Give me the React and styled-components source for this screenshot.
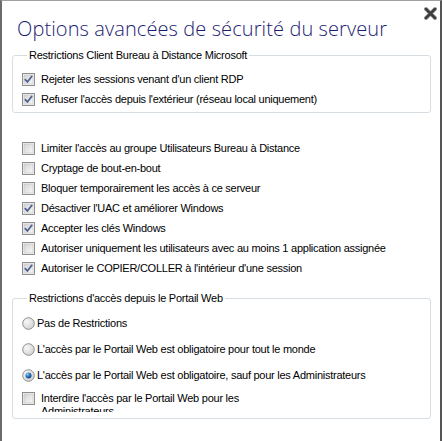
import React from "react";
import styled, { createGlobalStyle } from "styled-components";

const Global = createGlobalStyle`
  html, body { margin: 0; padding: 0; background: #ffffff; }
  body { font-family: "Liberation Sans", Arial, sans-serif; }
`;

const Window = styled.div`
  width: 442px;
  height: 441px;
  box-sizing: border-box;
  background: #ffffff;
  border-top: 1px solid #a0a0a0;
  border-left: 2px solid #6b6b6b;
  border-right: 2px solid #555555;
  overflow: hidden;
  padding: 0 9px 0 10px;
  font-family: "Liberation Sans", Arial, sans-serif;
  font-size: 11px;
  letter-spacing: -0.25px;
  color: #000;
`;

const Header = styled.div`
  display: flex;
  justify-content: space-between;
  align-items: flex-start;
  height: 48px;
`;

const Title = styled.h1`
  margin: 15px 0 0 5px;
  font-family: "Open Sans", "Segoe UI", sans-serif;
  font-weight: 300;
  font-size: 20px;
  line-height: 26px;
  letter-spacing: 0.1px;
  color: #1c1c72;
  white-space: nowrap;
`;

const Close = styled.button`
  margin: 6px -6px 0 0;
  padding: 0;
  border: 0;
  background: none;
  width: 13px;
  height: 13px;
  display: flex;
  cursor: pointer;
`;

const Group = styled.fieldset`
  margin: 0;
  min-width: 0;
  border: 1px solid #d6dde3;
  border-radius: 3px;
  padding: ${(p) => p.$pt}px 0 ${(p) => p.$pb}px 9px;
`;

const Legend = styled.legend`
  margin-left: 5px;
  padding: 0 2px;
  font-size: 11px;
  line-height: 13px;
  color: #000;
`;

const List = styled.div`
  display: flex;
  flex-direction: column;
  padding: ${(p) => p.$pad || "0"};
`;

const Row = styled.label`
  display: flex;
  align-items: ${(p) => (p.$top ? "flex-start" : "center")};
  height: ${(p) => p.$h || 20}px;
  gap: ${(p) => p.$gap ?? 6}px;
  white-space: nowrap;
  margin-top: ${(p) => p.$mt || 0}px;
`;

const BoxWrap = styled.span`
  flex: none;
  width: 13px;
  height: 13px;
  display: flex;
  margin-top: ${(p) => p.$mt || 0}px;
`;

const Text = styled.span`
  line-height: 13px;
`;

const WrapText = styled.span`
  white-space: normal;
  width: 225px;
  line-height: 13px;
  height: 20px;
  overflow: hidden;
`;

function CheckBox({ checked }) {
  return (
    <BoxWrap>
      <svg width="13" height="13" viewBox="0 0 13 13">
        <defs>
          <linearGradient id="cbg" x1="0" y1="0" x2="1" y2="1">
            <stop offset="0" stopColor="#d4d4d4" />
            <stop offset="1" stopColor="#f7f7f7" />
          </linearGradient>
        </defs>
        <rect x="0.5" y="0.5" width="12" height="12" fill="#f4f4f4" stroke="#8e8f8f" />
        <rect x="2" y="2" width="9" height="9" fill="url(#cbg)" stroke="#c4c4c4" strokeWidth="0.6" />
        {checked && (
          <path
            d="M3.3 6.6 L5.4 9 L9.8 3.3"
            fill="none"
            stroke="#4c5f8f"
            strokeWidth="1.7"
            strokeLinecap="round"
            strokeLinejoin="round"
          />
        )}
      </svg>
    </BoxWrap>
  );
}

function Radio({ checked }) {
  return (
    <BoxWrap>
      <svg width="13" height="13" viewBox="0 0 13 13">
        <defs>
          <radialGradient id="rbg" cx="0.35" cy="0.35" r="0.7">
            <stop offset="0" stopColor="#f8f8f8" />
            <stop offset="1" stopColor="#d2d2d2" />
          </radialGradient>
          <radialGradient id="rdot" cx="0.35" cy="0.3" r="0.75">
            <stop offset="0" stopColor="#8fd0f6" />
            <stop offset="0.5" stopColor="#2c78c0" />
            <stop offset="1" stopColor="#0d3d78" />
          </radialGradient>
        </defs>
        <circle cx="6.5" cy="6.5" r="5.8" fill="url(#rbg)" stroke="#8e8f8f" strokeWidth="1" />
        {checked && <circle cx="6.5" cy="6.5" r="3" fill="url(#rdot)" />}
      </svg>
    </BoxWrap>
  );
}

const CheckRow = ({ checked, children }) => (
  <Row>
    <CheckBox checked={checked} />
    <Text>{children}</Text>
  </Row>
);

const RadioRow = ({ checked, children }) => (
  <Row $h={26} $gap={2}>
    <Radio checked={checked} />
    <Text>{children}</Text>
  </Row>
);

export default function App() {
  return (
    <>
      <Global />
      <Window>
        <Header>
          <Title>Options avancées de sécurité du serveur</Title>
          <Close aria-label="Fermer">
            <svg width="13" height="13" viewBox="0 0 13 13">
              <path d="M2 2 L11 11 M11 2 L2 11" stroke="#c8c8c8" strokeWidth="4.4" strokeLinecap="round" />
              <path d="M2 2 L11 11 M11 2 L2 11" stroke="#3e3e3e" strokeWidth="3" strokeLinecap="round" />
            </svg>
          </Close>
        </Header>

        <Group $pt={7} $pb={3}>
          <Legend>Restrictions Client Bureau à Distance Microsoft</Legend>
          <CheckRow checked>Rejeter les sessions venant d'un client RDP</CheckRow>
          <CheckRow checked>Refuser l'accès depuis l'extérieur (réseau local uniquement)</CheckRow>
        </Group>

        <List $pad="25px 0 0 10px">
          <CheckRow>Limiter l'accès au groupe Utilisateurs Bureau à Distance</CheckRow>
          <CheckRow>Cryptage de bout-en-bout</CheckRow>
          <CheckRow>Bloquer temporairement les accès à ce serveur</CheckRow>
          <CheckRow checked>Désactiver l'UAC et améliorer Windows</CheckRow>
          <CheckRow checked>Accepter les clés Windows</CheckRow>
          <CheckRow>Autoriser uniquement les utilisateurs avec au moins 1 application assignée</CheckRow>
          <CheckRow checked>Autoriser le COPIER/COLLER à l'intérieur d'une session</CheckRow>
        </List>

        <List $pad="14px 0 0 0">
          <Group $pt={5} $pb={4}>
            <Legend>Restrictions d'accès depuis le Portail Web</Legend>
            <RadioRow>Pas de Restrictions</RadioRow>
            <RadioRow>L'accès par le Portail Web est obligatoire pour tout le monde</RadioRow>
            <RadioRow checked>L'accès par le Portail Web est obligatoire, sauf pour les Administrateurs</RadioRow>
            <Row $top $h={22} $mt={4}>
              <CheckBox />
              <WrapText>Interdire l'accès par le Portail Web pour les Administrateurs</WrapText>
            </Row>
          </Group>
        </List>
      </Window>
    </>
  );
}
